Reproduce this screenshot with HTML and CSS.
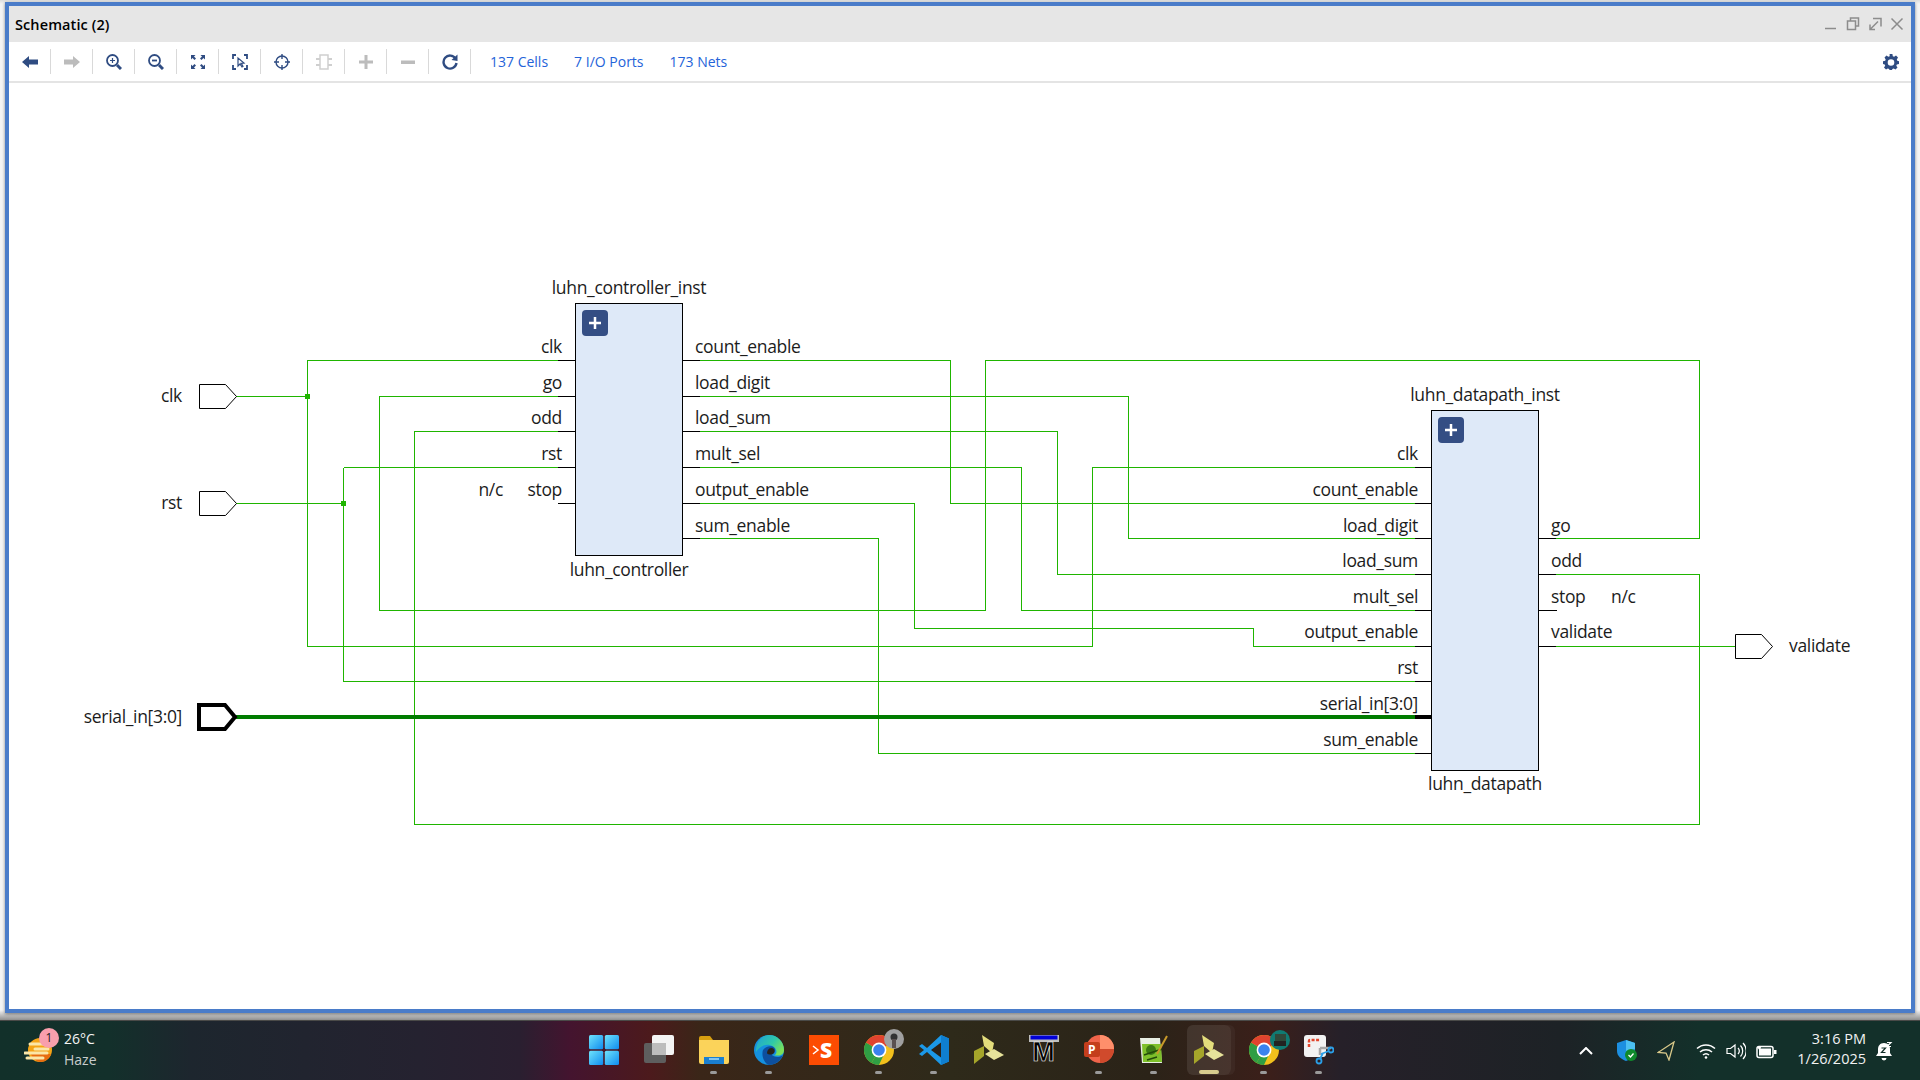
FILE: index.html
```html
<!DOCTYPE html>
<html lang="en">
<head>
<meta charset="utf-8">
<title>Schematic (2)</title>
<link rel="stylesheet" href="styles.css">
</head>
<body>
<svg class="defs" width="0" height="0">
  <defs>
    <linearGradient id="winblue" x1="0" y1="0" x2="1" y2="1"><stop offset="0" stop-color="#6fe3fb"/><stop offset="1" stop-color="#0f8cf0"/></linearGradient>
    <linearGradient id="edgeg" x1="0" y1="0" x2="1" y2="0.600"><stop offset="0" stop-color="#1f9fd8"/><stop offset=".6" stop-color="#2fc9a8"/><stop offset="1" stop-color="#7be05a"/></linearGradient>
    <symbol id="vivado" viewBox="0 0 30 30">
      <polygon points="8,0 20,8 18,18 10,11" fill="#e3dd7c"/>
      <polygon points="0,16 10,11 10,21 0,29" fill="#a5a52a"/>
      <polygon points="11,19 20,14 30,20 20,25" fill="#e6e39a"/>
    </symbol>
    <symbol id="chrome" viewBox="0 0 30 30">
      <circle cx="15" cy="15" r="15" fill="#f2c01c"/>
      <path d="M15 15 L2 7.5 A15 15 0 0 0 7.5 28 Z" fill="#2f9e44"/>
      <path d="M15 0 A15 15 0 0 0 2 7.5 L15 15 L28 7.5 A15 15 0 0 0 15 0 Z" fill="#e0432f"/>
      <path d="M15 15 L7.5 28 A15 15 0 0 0 15 30 L22 15 Z" fill="#2f9e44"/>
      <circle cx="15" cy="15" r="7.4" fill="#fff"/>
      <circle cx="15" cy="15" r="5.8" fill="#3b82ee"/>
    </symbol>
  </defs>
</svg>

<main class="desk">
  <section class="window">
    <header class="titlebar">
      <h1 class="title">Schematic (2)</h1>
      <div class="winctl">
        <svg width="16" height="16" viewBox="0 0 16 16"><path d="M2 12.500h11" class="wc"/></svg>
        <svg width="16" height="16" viewBox="0 0 16 16"><path d="M5.500 4.500V2h8v8H11M2.500 5h8v8.500h-8z" class="wc"/></svg>
        <svg width="16" height="16" viewBox="0 0 16 16"><path d="M6 2.500h8v8M3 13.500l8-8M3 8.500v5h5" class="wc"/></svg>
        <svg width="16" height="16" viewBox="0 0 16 16"><path d="M2.500 2.500l11 11M13.500 2.500l-11 11" class="wc"/></svg>
      </div>
    </header>
    <nav class="toolbar">
      <div class="tool"><svg width="16" height="12" viewBox="0 0 16 12"><polygon points="0,6 7,0 7,3.500 16,3.500 16,8.500 7,8.500 7,12" class="ifill"/></svg></div>
      <div class="tool"><svg width="16" height="12" viewBox="0 0 16 12"><polygon points="16,6 9,0 9,3.500 0,3.500 0,8.500 9,8.500 9,12" class="ifill off"/></svg></div>
      <div class="tool"><svg width="16" height="16" viewBox="0 0 16 16"><circle cx="6.500" cy="6.500" r="5.500" class="istroke"/><path d="M4 6.500h5M6.500 4v5" class="ithin"/><path d="M11 11l4 4" class="ibold"/></svg></div>
      <div class="tool"><svg width="16" height="16" viewBox="0 0 16 16"><circle cx="6.500" cy="6.500" r="5.500" class="istroke"/><path d="M4 6.500h5" class="istroke"/><path d="M11 11l4 4" class="ibold"/></svg></div>
      <div class="tool"><svg width="16" height="16" viewBox="0 0 16 16"><path d="M1 1l4.500 0-1.500 1.500 2 2-1.500 1.500-2-2-1.500 1.500zM15 1l0 4.500-1.500-1.500-2 2-1.500-1.500 2-2-1.500-1.500zM1 15l0-4.500 1.500 1.500 2-2 1.500 1.500-2 2 1.500 1.500zM15 15l-4.500 0 1.500-1.500-2-2 1.500-1.500 2 2 1.500-1.500z" class="ifill"/></svg></div>
      <div class="tool"><svg width="16" height="16" viewBox="0 0 16 16"><path d="M4 1H1v4M12 1h3v4M4 15H1v-4M12 15h3v-4" class="istroke"/><path d="M6 4l0 8 2-2 2 3 1-.7-1.800-3 2.800-.3z" class="ithin"/></svg></div>
      <div class="tool"><svg width="18" height="18" viewBox="0 0 18 18"><circle cx="9" cy="9" r="6" class="ithin2"/><path d="M9 1v5M9 12v5M1 9h5M12 9h5" class="ithin2"/></svg></div>
      <div class="tool"><svg width="18" height="16" viewBox="0 0 18 16"><rect x="5" y="1" width="8" height="14" class="ioff"/><path d="M1 5h4M1 11h4M13 5h4M13 11h4" class="ioffb"/></svg></div>
      <div class="tool"><svg width="14" height="14" viewBox="0 0 14 14"><path d="M0 5.500h5.500V0h3v5.500H14v3H8.500V14h-3V8.500H0z" class="ifill off"/></svg></div>
      <div class="tool"><svg width="14" height="14" viewBox="0 0 14 14"><rect x="0" y="5.500" width="14" height="3.500" class="ifill off"/></svg></div>
      <div class="tool"><svg width="16" height="16" viewBox="0 0 16 16"><path d="M13.500 4.500A6.500 6.500 0 1 0 14.500 9" class="istroke wide"/><polygon points="15.500,0.500 15.500,7 9.500,6" class="ifill"/></svg></div>
      <a class="link first">137 Cells</a>
      <a class="link">7 I/O Ports</a>
      <a class="link">173 Nets</a>
      <span class="gear"><svg width="16" height="16" viewBox="0 0 16 16"><path d="M6.600 0h2.800l.4 2.200 1.300.6 1.900-1.200 2 2-1.200 1.800.5 1.400L16 7.200v2.700l-2.200.5-.5 1.300 1.200 1.900-2 2-1.800-1.200-1.400.5-.4 2.100H6.600l-.4-2.100-1.400-.5L3 15.600l-2-2 1.200-1.900-.5-1.300L0 9.900V7.200l2.200-.4.500-1.400L1.500 3.600l2-2 1.800 1.200 1.400-.6zM8 5.200a3.300 3.300 0 1 0 0 6.600 3.300 3.300 0 0 0 0-6.600z" class="ifill" fill-rule="evenodd"/></svg></span>
    </nav>
    <div class="canvas">
      <svg class="schem" width="1902" height="926" viewBox="9 83 1902 926">
        <g class="wires">
          <path d="M236 396.500H307M307 360.500V646.500M307 360.500H557.500M307 646.500H1092.500V467.500H1415"/>
          <path d="M236 503.500H343.500M343.500 467.500V681.500M343.500 467.500H557.500M343.500 681.500H1415"/>
          <path d="M557.500 396.500H379.500V610.500H985.500V360.500H1699.500V538.500H1556"/>
          <path d="M557.500 431.500H414.500V824.500H1699.500V574.500H1556"/>
          <path d="M700 360.500H950.500V503.500H1415"/>
          <path d="M700 396.500H1128.500V538.500H1415"/>
          <path d="M700 431.500H1057.500V574.500H1415"/>
          <path d="M700 467.500H1021.500V610.500H1415"/>
          <path d="M700 503.500H914.500V628.500H1253.500V646.500H1415"/>
          <path d="M700 538.500H878.500V753.500H1415"/>
          <path d="M1556 646.500H1735"/>
        </g>
        <rect x="305" y="394" width="5" height="5" class="node"/>
        <rect x="341" y="501" width="5" height="5" class="node"/>
        <path d="M236 717H1415" class="bus"/>
        <path d="M1415 717H1431" class="busend"/>
        <g class="stubs">
          <path d="M557.500 360.500H575M557.500 396.500H575M557.500 431.500H575M557.500 467.500H575M557.500 503.500H575"/>
          <path d="M683 360.500H700M683 396.500H700M683 431.500H700M683 467.500H700M683 503.500H700M683 538.500H700"/>
          <path d="M1415 467.500H1431M1415 503.500H1431M1415 538.500H1431M1415 574.500H1431M1415 610.500H1431M1415 646.500H1431M1415 681.500H1431M1415 753.500H1431"/>
          <path d="M1539 538.500H1556M1539 574.500H1556M1539 610.500H1557M1539 646.500H1556"/>
        </g>
        <polygon points="199.500,384.500 225.500,384.500 236.500,396.500 225.500,408.500 199.500,408.500" class="port"/>
        <polygon points="199.500,491.500 225.500,491.500 236.500,503.500 225.500,515.500 199.500,515.500" class="port"/>
        <polygon points="1735.500,634.500 1761.500,634.500 1772.500,646.500 1761.500,658.500 1735.500,658.500" class="port"/>
        <polygon points="199,705 225,705 235,717 225,729 199,729" class="port busport"/>
        <rect x="575.500" y="303.500" width="107" height="252" class="block"/>
        <rect x="1431.500" y="410.500" width="107" height="360" class="block"/>
        <rect x="582" y="310" width="26" height="26" rx="4" class="plus"/>
        <path d="M589 323h12M595 317v12" class="pluss"/>
        <rect x="1438" y="417" width="26" height="26" rx="4" class="plus"/>
        <path d="M1445 430h12M1451 424v12" class="pluss"/>

        <text x="182" y="402" class="lb end">clk</text>
        <text x="182" y="509" class="lb end">rst</text>
        <text x="182" y="723" class="lb end">serial_in[3:0]</text>
        <text x="1789" y="652" class="lb">validate</text>

        <text x="629" y="294" class="lb mid">luhn_controller_inst</text>
        <text x="629" y="576" class="lb mid">luhn_controller</text>
        <text x="562" y="353" class="lb end">clk</text>
        <text x="562" y="389" class="lb end">go</text>
        <text x="562" y="424" class="lb end">odd</text>
        <text x="562" y="460" class="lb end">rst</text>
        <text x="562" y="496" class="lb end">stop</text>
        <text x="503" y="496" class="lb end">n/c</text>
        <text x="695" y="353" class="lb">count_enable</text>
        <text x="695" y="389" class="lb">load_digit</text>
        <text x="695" y="424" class="lb">load_sum</text>
        <text x="695" y="460" class="lb">mult_sel</text>
        <text x="695" y="496" class="lb">output_enable</text>
        <text x="695" y="532" class="lb">sum_enable</text>

        <text x="1485" y="401" class="lb mid">luhn_datapath_inst</text>
        <text x="1485" y="790" class="lb mid">luhn_datapath</text>
        <text x="1418" y="460" class="lb end">clk</text>
        <text x="1418" y="496" class="lb end">count_enable</text>
        <text x="1418" y="532" class="lb end">load_digit</text>
        <text x="1418" y="567" class="lb end">load_sum</text>
        <text x="1418" y="603" class="lb end">mult_sel</text>
        <text x="1418" y="638" class="lb end">output_enable</text>
        <text x="1418" y="674" class="lb end">rst</text>
        <text x="1418" y="710" class="lb end">serial_in[3:0]</text>
        <text x="1418" y="746" class="lb end">sum_enable</text>
        <text x="1551" y="532" class="lb">go</text>
        <text x="1551" y="567" class="lb">odd</text>
        <text x="1551" y="603" class="lb">stop</text>
        <text x="1611" y="603" class="lb">n/c</text>
        <text x="1551" y="638" class="lb">validate</text>
      </svg>
    </div>
  </section>
</main>

<footer class="taskbar">
  <div class="weather">
    <span class="wicon">
      <svg width="30" height="28" viewBox="0 0 30 28"><circle cx="16" cy="14" r="12" fill="#f5a416"/><path d="M16 26a12 12 0 0 0 11-8H7a12 12 0 0 0 9 8z" fill="#e86c10"/><path d="M6 8h20M11 13h13M1 17h22M3 22h16" stroke="#fbe6a8" stroke-width="3" stroke-linecap="round"/></svg>
      <span class="wbadge">1</span>
    </span>
    <div class="wtext"><span class="temp">26°C</span><span class="haze">Haze</span></div>
  </div>
  <div class="apps">
    <div class="slot"><svg width="30" height="30" viewBox="0 0 30 30"><rect x="0" y="0" width="14.200" height="14.200" rx="1.500" fill="url(#winblue)"/><rect x="15.800" y="0" width="14.200" height="14.200" rx="1.500" fill="url(#winblue)"/><rect x="0" y="15.800" width="14.200" height="14.200" rx="1.500" fill="url(#winblue)"/><rect x="15.800" y="15.800" width="14.200" height="14.200" rx="1.500" fill="url(#winblue)"/></svg></div>
    <div class="slot"><svg width="30" height="30" viewBox="0 0 30 30"><rect x="0" y="8" width="22" height="20" rx="2" fill="#5e5e5e"/><rect x="8" y="0" width="22" height="20" rx="2" fill="#f4f4f4"/><rect x="8" y="8" width="14" height="12" fill="#bdbdbd"/></svg></div>
    <div class="slot"><svg width="30" height="30" viewBox="0 0 30 30"><path d="M0 3a2 2 0 0 1 2-2h9l3 4h-14z" fill="#d8a010"/><path d="M0 5h30v22a2 2 0 0 1-2 2H2a2 2 0 0 1-2-2z" fill="#fbd35a"/><path d="M5 22h20v7H5z" fill="#1a7fd0"/><path d="M10 24h10" stroke="#a8dcf8" stroke-width="1.500"/></svg><span class="dot"></span></div>
    <div class="slot"><svg width="30" height="30" viewBox="0 0 30 30"><circle cx="15" cy="15" r="15" fill="#1590de"/><path d="M15 0A15 15 0 0 1 30 15c0 3-2 5.500-5.500 5.500H20c2-1 2.800-3 2.300-5C21 11 15 8.500 9.500 10.500 7 11.500 4.500 13 2 17 1.500 8 7 0 15 0z" fill="url(#edgeg)"/><path d="M9 15c2-3 6-4.500 9.500-3.500 2.500 1 3.500 3.500 2 6-1 1.500-2 2-3 2 2 3 8 3.500 11.500.5-2.500 6-8 10-14 10-4.500-1.500-8-9-6-15z" fill="#0d4f9e"/><path d="M13 18c0-3 2-5 4.500-5 2 0 3 1.500 3 3 0 2-2 3.500-3.500 3.500-2 0-4-.5-4-1.500z" fill="#2a231a"/></svg><span class="dot"></span></div>
    <div class="slot"><svg width="30" height="30" viewBox="0 0 30 30"><rect width="30" height="30" fill="#fc4c02"/><path d="M4 11l5 4-5 4" fill="none" stroke="#fff" stroke-width="1.500"/><text x="11" y="23" class="stext">S</text></svg></div>
    <div class="slot badged"><svg width="30" height="30"><use href="#chrome"/></svg><svg class="tbadge" width="20" height="20" viewBox="0 0 20 20"><circle cx="10" cy="10" r="10" fill="#a0a0a0"/><circle cx="10" cy="8" r="3.500" fill="#333"/><path d="M8 10h4v9H8z" fill="#5a5050"/></svg><span class="dot"></span></div>
    <div class="slot"><svg width="30" height="30" viewBox="0 0 30 30"><path d="M22 0l8 3.500v23L22 30 8 17l-5 4-3-2 5-4-5-4 3-2 5 4z" fill="#1b98e8"/><path d="M22 7.500v15L12 15z" fill="#2b2218"/><path d="M22 0l8 3.500v23L22 30z" fill="#0f7fd0"/></svg><span class="dot"></span></div>
    <div class="slot"><svg width="30" height="30"><use href="#vivado"/></svg></div>
    <div class="slot"><svg width="30" height="30" viewBox="0 0 30 30"><rect x="0" y="0" width="30" height="7" fill="#bfbfbf"/><rect x="1.500" y="0.500" width="27" height="4" fill="#0000d8"/></svg><span class="mtext">M</span></div>
    <div class="slot"><svg width="30" height="30" viewBox="0 0 30 30"><circle cx="16" cy="14" r="14" fill="#f0644a"/><path d="M16 14V0a14 14 0 0 1 14 14z" fill="#ff8f6b"/><path d="M16 14h14a14 14 0 0 1-14 14z" fill="#d04a2c"/><rect x="0" y="7" width="16" height="15" rx="2" fill="#c43e1c"/><text x="4" y="19" class="ptext">P</text></svg><span class="dot"></span></div>
    <div class="slot"><svg width="30" height="30" viewBox="0 0 30 30"><path d="M1 3h20l2 25H3z" fill="#e8efe4"/><path d="M3 9h19l1 18H4z" fill="#7ec02a"/><circle cx="12" cy="15" r="5" fill="#3c7a14"/><path d="M5 20l18-6M8 25l10-3" stroke="#234a0a" stroke-width="1.500"/><path d="M18 19L28 1" stroke="#c99a2a" stroke-width="2"/></svg><span class="dot"></span></div>
    <div class="slot active"><span class="tile"></span><svg width="30" height="30"><use href="#vivado"/></svg><span class="dot live"></span></div>
    <div class="slot badged two"><svg width="30" height="30"><use href="#chrome"/></svg><svg class="tbadge" width="20" height="20" viewBox="0 0 20 20"><circle cx="10" cy="10" r="10" fill="#107a72"/><rect x="5" y="4" width="11" height="8" fill="#30483a"/><rect x="4" y="11" width="12" height="5" fill="#222"/></svg><span class="dot"></span></div>
    <div class="slot"><svg width="30" height="30" viewBox="0 0 30 30"><rect x="0" y="0" width="22" height="22" rx="3" fill="#f2f2f2"/><path d="M5 12V6a1 1 0 0 1 1-1h10" fill="none" stroke="#e2452c" stroke-width="2.500" stroke-dasharray="3 1.500"/><path d="M16 13l11 0M16 13v7" stroke="#a8a8a8" stroke-width="2.500"/><circle cx="27" cy="15" r="2.500" fill="none" stroke="#2a9fe8" stroke-width="1.800"/><circle cx="15" cy="26" r="2.500" fill="none" stroke="#2a9fe8" stroke-width="1.800"/><path d="M25 16l-8 3M16 24l3-6" stroke="#2a9fe8" stroke-width="1.800"/></svg><span class="dot"></span></div>
  </div>
  <div class="tray">
    <svg class="ti chev" width="14" height="8" viewBox="0 0 14 8"><path d="M1 7l6-6 6 6" class="ts wide"/></svg>
    <svg class="ti shield" width="20" height="22" viewBox="0 0 20 22"><path d="M9 0l9 3v8c0 5-4 8-9 10-5-2-9-5-9-10V3z" fill="#1c8fe0"/><path d="M9 0l9 3v6L9 11z" fill="#4cc0f2"/><circle cx="14" cy="15" r="6" fill="#0f8a2c"/><path d="M11.500 15l2 2 3-3.500" fill="none" stroke="#fff" stroke-width="1.300"/></svg>
    <svg class="ti nav" width="18" height="20" viewBox="0 0 18 20"><path d="M17 1L1 11.500l8 .5 3 7z" fill="none" stroke="#d9c98a" stroke-width="1.300"/></svg>
    <svg class="ti wifi" width="20" height="16" viewBox="0 0 20 16"><path d="M1 5.500a13 13 0 0 1 18 0M4 9a9 9 0 0 1 12 0M7 12a4.500 4.500 0 0 1 6 0" class="ts"/><circle cx="10" cy="14.500" r="1.300" fill="#fff"/></svg>
    <svg class="ti vol" width="20" height="18" viewBox="0 0 20 18"><path d="M1 6.500h3.500L9 3v12l-4.500-3.500H1z" class="ts thin"/><path d="M12 6a4.500 4.500 0 0 1 0 6M14.500 3.500a8 8 0 0 1 0 11M17 1a11.500 11.500 0 0 1 0 16" class="ts thin"/></svg>
    <svg class="ti bat" width="21" height="18" viewBox="0 0 21 18"><rect x="1" y="4.500" width="16" height="11" rx="2" class="ts"/><rect x="3" y="6.500" width="12" height="7" fill="#fff"/><rect x="18" y="8" width="2.500" height="4" fill="#fff"/><path d="M3 0v5H1l3 4 1-4H3" fill="#fff"/></svg>
    <div class="clock"><span>3:16 PM</span><span>1/26/2025</span></div>
    <svg class="ti bell" width="18" height="20" viewBox="0 0 18 20"><path d="M9 2c-4 0-6 3-6 6v4l-2 3h16l-2-3V8c0-3-2-6-6-6z" fill="#fff"/><path d="M6.500 17a2.500 2.500 0 0 0 5 0z" fill="#fff"/><path d="M6.500 7h4l-4 4.500h4" fill="none" stroke="#14302a" stroke-width="1.200"/><path d="M12 1.500h4l-4 4h4" fill="none" stroke="#fff" stroke-width="1.200"/></svg>
  </div>
</footer>
</body>
</html>
```
FILE: styles.css
```css
* { box-sizing: border-box; }
html, body { margin: 0; padding: 0; }
body {
  width: 1920px;
  height: 1080px;
  overflow: hidden;
  display: flex;
  flex-direction: column;
  font-family: "Open Sans", "Noto Sans", sans-serif;
  background: #efefef;
}
.defs { position: absolute; }
.desk {
  height: 1020px;
  padding: 2px 5px 7px;
  background: linear-gradient(#dcdcdc 0, #f4f4f4 4px, #f4f4f4 1010px, #8f8f8f 1020px);
}
.window {
  height: 1011px;
  border: 4px solid #4a7cc9;
  display: flex;
  flex-direction: column;
  background: #fff;
  box-shadow: 0 1px 3px rgba(0,0,0,.45);
}
.titlebar {
  height: 36px;
  flex: none;
  background: #e6e6e6;
  display: flex;
  align-items: center;
  justify-content: space-between;
  padding: 0 6px;
}
.title { margin: 0; font-size: 14.500px; font-weight: 600; letter-spacing: .1px; color: #000; }
.winctl { display: flex; gap: 6px; margin-right: 0; }
.wc { fill: none; stroke: #8c8c8c; stroke-width: 1.500; }
.toolbar {
  height: 41px;
  flex: none;
  background: #fff;
  border-bottom: 2px solid #e4e4e4;
  display: flex;
  align-items: center;
}
.tool {
  width: 42px;
  height: 25px;
  border-right: 1px solid #d9d9d9;
  display: flex;
  align-items: center;
  justify-content: center;
}
.ifill { fill: #2f4c82; }
.ifill.off { fill: #bcbcbc; }
.istroke { fill: none; stroke: #2f4c82; stroke-width: 1.800; }
.istroke.wide { stroke-width: 2.400; }
.ithin { fill: none; stroke: #2f4c82; stroke-width: 1.200; }
.ithin2 { fill: none; stroke: #2f4c82; stroke-width: 1.400; }
.ibold { fill: none; stroke: #2f4c82; stroke-width: 3; }
.ioff { fill: none; stroke: #cfcfcf; stroke-width: 1.500; }
.ioffb { fill: none; stroke: #cfcfcf; stroke-width: 2; }
.link { font-size: 14px; color: #2463d9; letter-spacing: 0; margin-left: 26px; white-space: nowrap; }
.link.first { margin-left: 19px; }
.gear { margin-left: auto; margin-right: 12px; display: flex; }
.canvas { flex: 1; background: #fff; min-height: 0; }
.schem { display: block; }
.wires path { fill: none; stroke: #1fb500; stroke-width: 1; shape-rendering: crispEdges; }
.node { fill: #1fb500; }
.bus { fill: none; stroke: #007c00; stroke-width: 4; shape-rendering: crispEdges; }
.busend { fill: none; stroke: #000; stroke-width: 4; shape-rendering: crispEdges; }
.stubs path { fill: none; stroke: #000; stroke-width: 1; shape-rendering: crispEdges; }
.port { fill: #fff; stroke: #000; stroke-width: 1; }
.busport { stroke-width: 4; }
.block { fill: #dee9f8; stroke: #000; stroke-width: 1; shape-rendering: crispEdges; }
.plus { fill: #344e84; }
.pluss { fill: none; stroke: #fff; stroke-width: 2.500; }
.lb { font-family: "Open Sans", "Noto Sans", sans-serif; font-size: 17.500px; letter-spacing: -.33px; fill: #1c1c1c; }
.end { text-anchor: end; }
.mid { text-anchor: middle; }

.taskbar {
  height: 60px;
  flex: none;
  border-top: 1px solid #4a4a48;
  display: grid;
  grid-template-columns: 576px 770px 574px;
  background: linear-gradient(90deg, #12302a 0, #13302b 110px, #1d262e 190px, #252230 420px, #2a1f30 520px, #44142f 570px, #4c1a1c 650px, #3a2618 700px, #2e2a1a 950px, #2b2318 1150px, #3b1f1a 1270px, #262029 1340px, #1d2226 1560px, #13302a 1700px, #13302a 1920px);
  color: #fff;
}
.weather { display: flex; align-items: flex-start; padding: 15px 0 0 24px; }
.wicon { position: relative; width: 30px; height: 28px; display: block; }
.wbadge {
  position: absolute;
  left: 15px;
  top: -8px;
  width: 20px;
  height: 20px;
  border-radius: 50%;
  background: #f89fad;
  color: #222;
  font-size: 12px;
  line-height: 20px;
  text-align: center;
}
.wtext { display: flex; flex-direction: column; margin: -7px 0 0 10px; font-size: 14px; line-height: 20.500px; }
.temp { color: #f4f4f4; }
.haze { color: #c8cccc; }
.apps { display: flex; }
.slot {
  position: relative;
  width: 55px;
  padding-top: 14px;
  display: flex;
  flex-direction: column;
  align-items: center;
}
.slot > svg { display: block; flex: none; position: relative; }
.dot { width: 7px; height: 3px; border-radius: 2px; background: #9a9a9a; margin-top: 6px; position: relative; }
.dot.live { width: 20px; height: 4px; background: #d8cc8e; margin-top: 5px; }
.tile {
  position: absolute;
  left: 6px;
  top: 4px;
  width: 44px;
  height: 50px;
  border-radius: 6px;
  background: rgba(255,255,255,.09);
  box-shadow: 4px 0 0 rgba(255,255,255,.04);
}
.tbadge { position: absolute !important; right: 2px; top: 8px; }
.two .tbadge { right: 1px; top: 9px; }
.mtext {
  position: absolute;
  left: 0;
  right: 0;
  top: 18px;
  text-align: center;
  font-family: "Liberation Sans", sans-serif;
  font-size: 27px;
  line-height: 26px;
  font-weight: 700;
  color: #000;
  -webkit-text-stroke: .6px #fff;
}
.stext { font-family: "Open Sans", sans-serif; font-weight: 800; font-size: 21px; fill: #fff; }
.ptext { font-family: "Open Sans", sans-serif; font-weight: 700; font-size: 12px; fill: #fff; }
.tray { display: flex; align-items: center; padding-bottom: 0; position: relative; }
.ti { flex: none; display: block; }
.ts { fill: none; stroke: #fff; stroke-width: 1.500; }
.ts.wide { stroke-width: 2; }
.ts.thin { stroke-width: 1.200; }
.chev { margin-left: 233px; }
.shield { margin-left: 24px; }
.nav { margin-left: 20px; }
.wifi { margin-left: 21px; }
.vol { margin-left: 10px; }
.bat { margin-left: 10px; }
.clock {
  width: 89px;
  display: flex;
  flex-direction: column;
  align-items: flex-end;
  font-size: 14.500px;
  line-height: 20px;
  color: #f2f2f2;
  margin-top: -4px;
}
.bell { margin-left: 9px; }
```
